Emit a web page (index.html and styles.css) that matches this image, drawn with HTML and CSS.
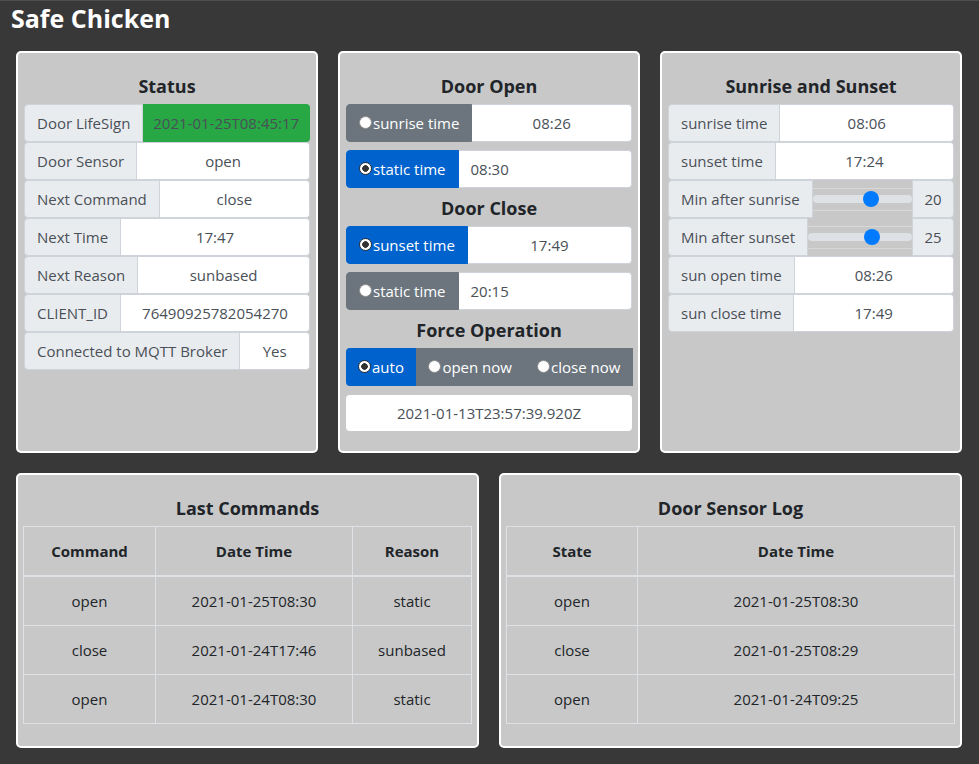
FILE: index.html
```html
<!DOCTYPE html>
<html lang="en">
<head>
<meta charset="utf-8">
<title>Safe Chicken</title>
<link rel="stylesheet" href="styles.css">
</head>
<body>
<header class="topbar"><h1 class="app-title">Safe Chicken</h1></header>
<main class="dash">
  <section class="grid-top">
    <div class="card">
      <h5 class="card-title">Status</h5>
      <div class="ig"><span class="ig-label">Door LifeSign</span><span class="ig-value ok">2021-01-25T08:45:17</span></div>
      <div class="ig"><span class="ig-label">Door Sensor</span><span class="ig-value">open</span></div>
      <div class="ig"><span class="ig-label">Next Command</span><span class="ig-value">close</span></div>
      <div class="ig"><span class="ig-label">Next Time</span><span class="ig-value">17:47</span></div>
      <div class="ig"><span class="ig-label">Next Reason</span><span class="ig-value">sunbased</span></div>
      <div class="ig"><span class="ig-label">CLIENT_ID</span><span class="ig-value">76490925782054270</span></div>
      <div class="ig"><span class="ig-label">Connected to MQTT Broker</span><span class="ig-value">Yes</span></div>
    </div>

    <div class="card">
      <h5 class="card-title">Door Open</h5>
      <div class="ig spaced"><span class="ig-label btn"><span class="radio"></span>sunrise time</span><span class="ig-value">08:26</span></div>
      <div class="ig spaced"><span class="ig-label btn active"><span class="radio on"></span>static time</span><span class="ig-value left">08:30</span></div>
      <h5 class="card-title">Door Close</h5>
      <div class="ig spaced"><span class="ig-label btn active"><span class="radio on"></span>sunset time</span><span class="ig-value">17:49</span></div>
      <div class="ig spaced"><span class="ig-label btn"><span class="radio"></span>static time</span><span class="ig-value left">20:15</span></div>
      <h5 class="card-title">Force Operation</h5>
      <div class="seg">
        <span class="seg-btn active"><span class="radio on"></span>auto</span>
        <span class="seg-btn grow"><span class="radio"></span>open now</span>
        <span class="seg-btn grow"><span class="radio"></span>close now</span>
      </div>
      <div class="stamp">2021-01-13T23:57:39.920Z</div>
    </div>

    <div class="card">
      <h5 class="card-title">Sunrise and Sunset</h5>
      <div class="ig"><span class="ig-label">sunrise time</span><span class="ig-value">08:06</span></div>
      <div class="ig"><span class="ig-label">sunset time</span><span class="ig-value">17:24</span></div>
      <div class="ig"><span class="ig-label">Min after sunrise</span><span class="slider"><input class="range" type="range" min="0" max="33" value="20"></span><span class="ig-num">20</span></div>
      <div class="ig"><span class="ig-label">Min after sunset</span><span class="slider"><input class="range" type="range" min="0" max="39" value="25"></span><span class="ig-num">25</span></div>
      <div class="ig"><span class="ig-label">sun open time</span><span class="ig-value">08:26</span></div>
      <div class="ig"><span class="ig-label">sun close time</span><span class="ig-value">17:49</span></div>
    </div>
  </section>

  <section class="grid-bottom">
    <div class="card wide">
      <h5 class="card-title">Last Commands</h5>
      <table class="log">
        <thead><tr><th class="c-cmd">Command</th><th class="c-dt">Date Time</th><th>Reason</th></tr></thead>
        <tbody>
          <tr><td>open</td><td>2021-01-25T08:30</td><td>static</td></tr>
          <tr><td>close</td><td>2021-01-24T17:46</td><td>sunbased</td></tr>
          <tr><td>open</td><td>2021-01-24T08:30</td><td>static</td></tr>
        </tbody>
      </table>
    </div>
    <div class="card wide">
      <h5 class="card-title">Door Sensor Log</h5>
      <table class="log">
        <thead><tr><th class="c-state">State</th><th>Date Time</th></tr></thead>
        <tbody>
          <tr><td>open</td><td>2021-01-25T08:30</td></tr>
          <tr><td>close</td><td>2021-01-25T08:29</td></tr>
          <tr><td>open</td><td>2021-01-24T09:25</td></tr>
        </tbody>
      </table>
    </div>
  </section>
</main>
</body>
</html>
```

FILE: styles.css
```css
* { box-sizing: border-box; }

body {
  margin: 0;
  background: #383838;
  border-top: 1px solid #4e4e4e;
  font-family: "Open Sans", "Noto Sans", sans-serif;
  font-size: 15px;
  line-height: 24px;
  color: #212529;
}

.topbar { padding: 0 11px; }

.app-title {
  margin: 0;
  font-size: 25px;
  line-height: 34px;
  font-weight: 700;
  color: #fff;
}

.dash {
  padding: 16px 17px 17px 16px;
  display: flex;
  flex-direction: column;
  gap: 20px;
}

.grid-top {
  display: grid;
  grid-template-columns: repeat(3, 1fr);
  gap: 20px;
}

.grid-bottom {
  display: grid;
  grid-template-columns: repeat(2, 1fr);
  gap: 20px;
}

.card {
  background: #c8c8c8;
  border: 2px solid #fff;
  border-radius: 5px;
  padding: 21px 6px 20px;
}

.card.wide { padding: 21px 5px 22px; }

.card-title {
  margin: 0 0 6px;
  text-align: center;
  font-size: 18px;
  line-height: 24px;
  font-weight: 700;
  color: #212529;
}

.ig {
  display: flex;
  height: 38px;
  color: #495057;
}

.ig.spaced { margin-bottom: 8px; }

.ig-label {
  display: flex;
  align-items: center;
  padding: 0 12px;
  background: #e9ecef;
  border: 1px solid #ced4da;
  border-radius: 4px 0 0 4px;
  white-space: nowrap;
}

.ig-label.btn {
  background: #6c757d;
  border-color: #6c757d;
  color: #fff;
}

.ig-label.btn.active {
  background: #0062cc;
  border-color: #0062cc;
}

.ig-value {
  flex: 1;
  display: flex;
  align-items: center;
  justify-content: center;
  background: #fff;
  border: 1px solid #ced4da;
  border-left: 0;
  border-radius: 0 4px 4px 0;
  white-space: nowrap;
}

.ig-value.ok {
  background: #28a745;
  border-color: #28a745;
}

.ig-value.left {
  justify-content: flex-start;
  padding-left: 12px;
}

.radio {
  flex: none;
  width: 13px;
  height: 13px;
  border-radius: 50%;
  background: #fff;
  border: 1px solid #8a8a8a;
  margin-right: 1px;
  position: relative;
  top: -1px;
}

.radio.on {
  border-color: #333;
  background: radial-gradient(circle, #333 0 3px, #fff 3.6px);
}

.seg {
  display: flex;
  height: 38px;
  margin-bottom: 9px;
  border-radius: 4px 0 0 4px;
  overflow: hidden;
  margin-right: -1px;
}

.seg-btn {
  display: flex;
  align-items: center;
  padding: 0 12px;
  background: #6c757d;
  color: #fff;
  white-space: nowrap;
}

.seg-btn.active { background: #0062cc; }
.seg-btn.grow { flex: 1; justify-content: center; padding: 0 8px; }

.stamp {
  height: 36px;
  display: flex;
  align-items: center;
  justify-content: center;
  background: #fff;
  border-radius: 4px;
  color: #495057;
}

.slider {
  flex: 1;
  display: flex;
  align-items: center;
}

.range {
  -webkit-appearance: none;
  appearance: none;
  width: 100%;
  height: 23px;
  margin: 0;
  padding: 0;
  background: transparent;
  border-top: 1px solid #d8d8d8;
  border-bottom: 1px solid #d8d8d8;
}

.range::-webkit-slider-runnable-track {
  height: 8px;
  background: #dee2e6;
  border-radius: 16px;
}

.range::-webkit-slider-thumb {
  -webkit-appearance: none;
  appearance: none;
  width: 16px;
  height: 16px;
  margin-top: -4px;
  border: 0;
  border-radius: 50%;
  background: #007bff;
}

.ig-num {
  width: 42px;
  display: flex;
  align-items: center;
  justify-content: center;
  background: #e9ecef;
  border: 1px solid #ced4da;
  border-radius: 0 4px 4px 0;
}

.log {
  width: 100%;
  border-collapse: collapse;
  color: #212529;
}

.log th,
.log td {
  border: 1px solid #dee2e6;
  padding: 12px;
  text-align: center;
  line-height: 24px;
  font-weight: 400;
}

.log th {
  font-weight: 700;
  border-bottom-width: 2px;
}

.c-cmd { width: 132px; }
.c-dt { width: 197px; }
.c-state { width: 131px; }
```
